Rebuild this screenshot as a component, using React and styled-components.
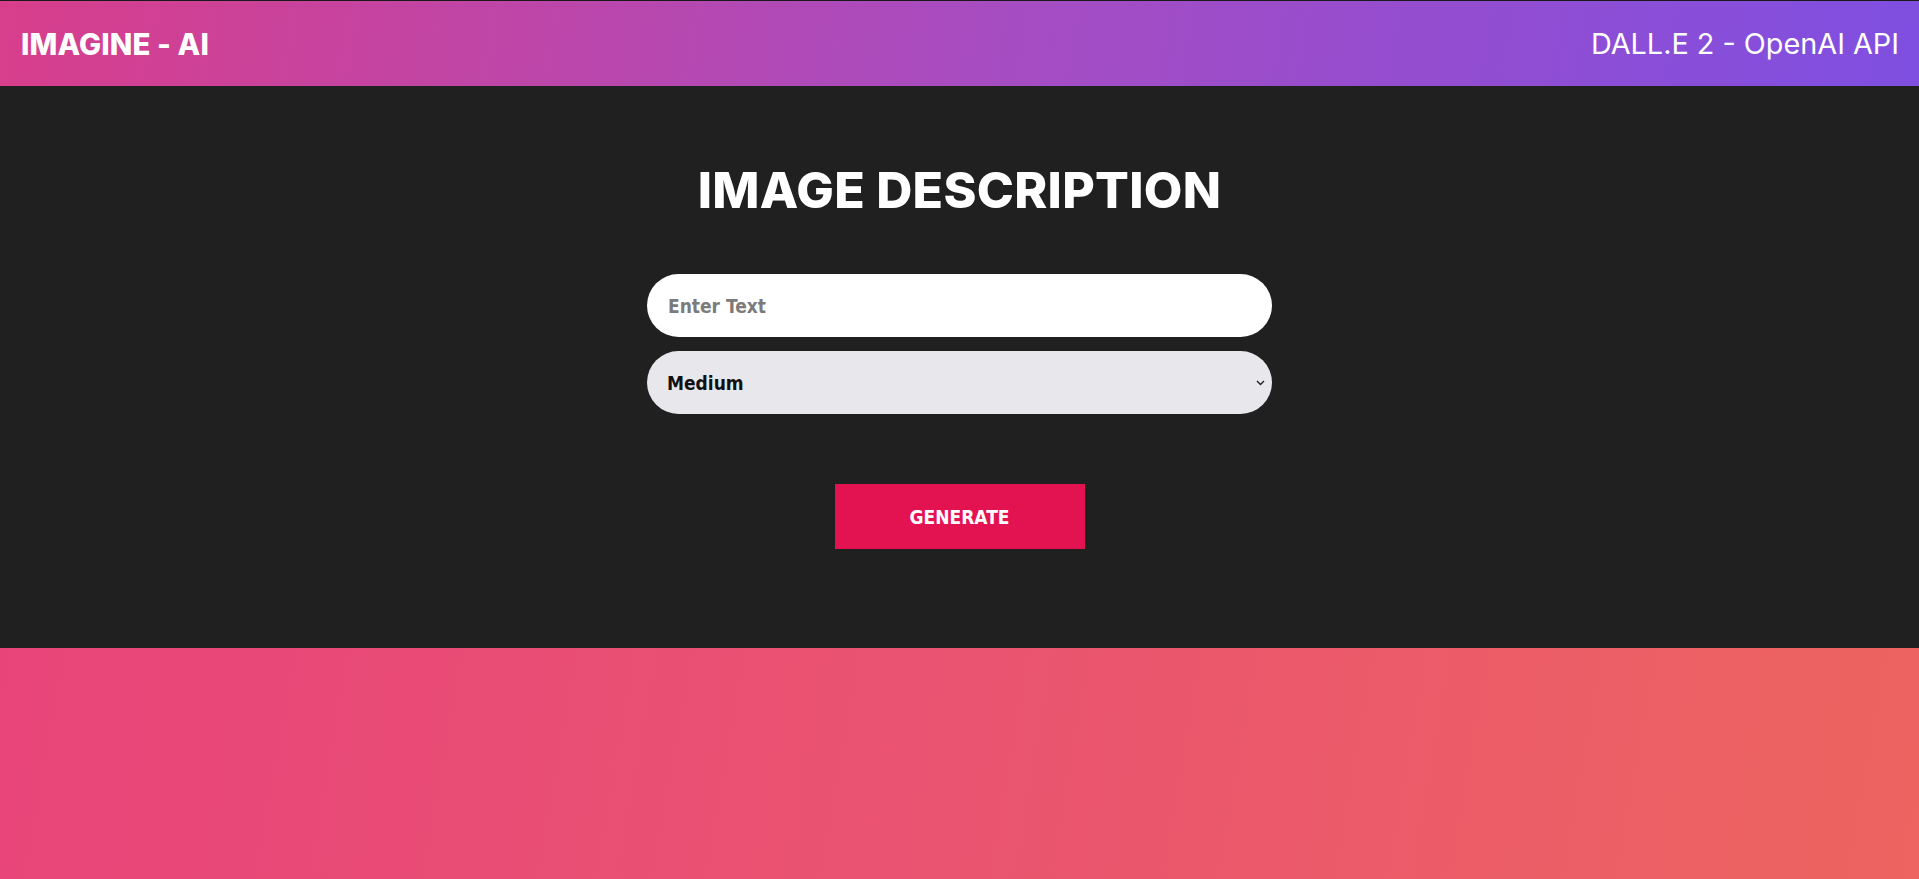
import React from "react";
import styled, { createGlobalStyle } from "styled-components";

const Global = createGlobalStyle`
  html, body { margin: 0; padding: 0; }
  body { background: #202020; }
  * { box-sizing: border-box; }
`;

const Page = styled.div`
  min-height: 100vh;
  display: flex;
  flex-direction: column;
  border-top: 1px solid #1a1a1a;
`;

const Header = styled.header`
  height: 85px;
  display: flex;
  align-items: center;
  justify-content: space-between;
  padding: 0 20px 0 21px;
  background: linear-gradient(100deg, #d83e8b 0%, #a84cc0 50%, #7f4fe1 100%);
  color: #fff;
`;

const Logo = styled.div`
  font-family: "Inter", "Open Sans", sans-serif;
  font-weight: 800;
  font-size: 29.5px;
  letter-spacing: 0.1px;
`;

const Api = styled.div`
  font-family: "Inter", "Open Sans", sans-serif;
  font-weight: 400;
  font-size: 28.8px;
`;

const Main = styled.main`
  background: #202020;
  display: flex;
  flex-direction: column;
  align-items: center;
  padding: 74px 0 99px;
`;

const Title = styled.h1`
  margin: 0;
  font-family: "Inter", "Open Sans", sans-serif;
  font-weight: 800;
  font-size: 50px;
  line-height: 60px;
  color: #fff;
  letter-spacing: 0.3px;
`;

const Form = styled.form`
  margin-top: 54px;
  display: flex;
  flex-direction: column;
  align-items: center;
  gap: 14px;
`;

const fieldFont = `
  font-family: "DejaVu Sans Condensed", "DejaVu Sans", sans-serif;
  font-weight: 700;
  font-size: 19px;
`;

const TextInput = styled.input`
  ${fieldFont}
  width: 625px;
  height: 63px;
  border: none;
  outline: none;
  border-radius: 32px;
  padding: 0 21px;
  background: #fff;
  color: #111;
  &::placeholder { color: #7b7b7b; }
`;

const SelectWrap = styled.div`
  position: relative;
  width: 625px;
  height: 63px;
`;

const Select = styled.select`
  ${fieldFont}
  appearance: none;
  width: 100%;
  height: 100%;
  border: none;
  outline: none;
  border-radius: 32px;
  padding: 0 40px 0 20px;
  background: #e8e7ec;
  color: #111;
`;

const Chevron = styled.svg`
  position: absolute;
  right: 7px;
  top: 29px;
  width: 9px;
  height: 6px;
  pointer-events: none;
`;

const Button = styled.button`
  margin-top: 70px;
  width: 250px;
  height: 65px;
  border: none;
  background: #e31352;
  color: #fff;
  font-family: "DejaVu Sans Condensed", "DejaVu Sans", sans-serif;
  font-weight: 700;
  font-size: 19px;
  cursor: pointer;
`;

const Footer = styled.div`
  flex: 1;
  background: linear-gradient(100deg, #e8447a 0%, #ea5470 50%, #ed6460 100%);
`;

export default function App() {
  return (
    <>
      <Global />
      <Page>
        <Header>
          <Logo>IMAGINE - AI</Logo>
          <Api>DALL.E 2 - OpenAI API</Api>
        </Header>
        <Main>
          <Title>IMAGE DESCRIPTION</Title>
          <Form onSubmit={(e) => e.preventDefault()}>
            <TextInput type="text" placeholder="Enter Text" />
            <SelectWrap>
              <Select defaultValue="medium">
                <option value="small">Small</option>
                <option value="medium">Medium</option>
                <option value="large">Large</option>
              </Select>
              <Chevron viewBox="0 0 9 6">
                <path d="M1 1 L4.5 4.5 L8 1" fill="none" stroke="#222" strokeWidth="1.4" />
              </Chevron>
            </SelectWrap>
          </Form>
          <Button type="button">GENERATE</Button>
        </Main>
        <Footer />
      </Page>
    </>
  );
}
